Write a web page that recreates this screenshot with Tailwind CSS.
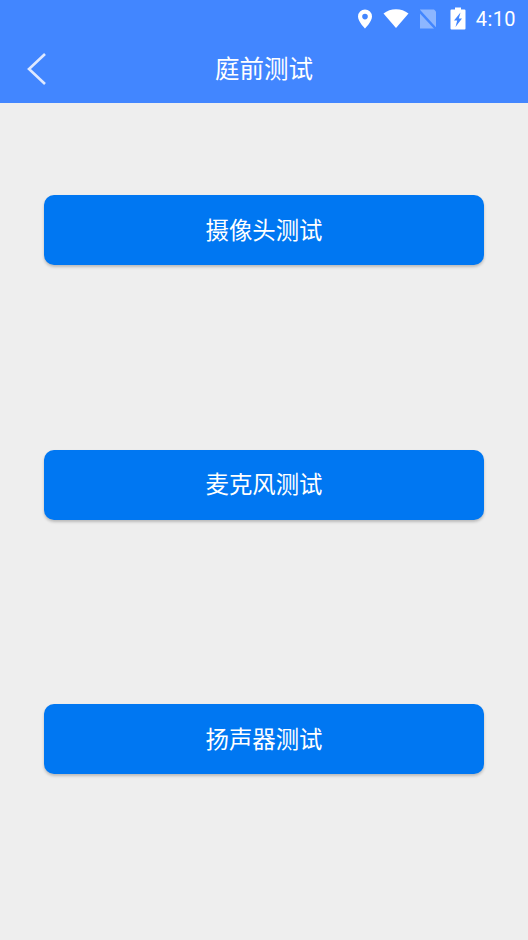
<!DOCTYPE html>
<html lang="zh">
<head>
  <meta charset="UTF-8">
  <title>庭前测试</title>
  <script src="https://cdn.jsdelivr.net/npm/@tailwindcss/browser@4"></script>
</head>
<body class="bg-[#eeeeee] h-[940px] w-[528px] overflow-hidden font-['Roboto','Noto_Sans_CJK_SC',sans-serif]">

  <!-- Header -->
  <div class="bg-[#4286ff] h-[103px] flex flex-col">
    <!-- Status bar -->
    <div class="h-[37px] flex items-center justify-end pr-3 text-white">
      <svg class="w-[16px] h-[20px] mr-[10px]" viewBox="0 0 16 20" fill="#fff">
        <path fill-rule="evenodd" d="M8 0.500a7 7 0 0 0-7 7c0 5 7 12 7 12s7-7 7-12a7 7 0 0 0-7-7zm0 4.300a2.800 2.800 0 1 1 0 5.600a2.800 2.800 0 0 1 0-5.600z"/>
      </svg>
      <svg class="w-[26px] h-[19px] mr-[10px]" viewBox="0 0 26 19" fill="#fff">
        <path d="M13 19L0.500 4.500C4 1.800 8.300 0.300 13 0.300s9 1.500 12.500 4.200z"/>
      </svg>
      <svg class="w-[18px] h-[20px] mr-[13px]" viewBox="0 0 18 20">
        <path d="M1 0.500H15l2 2V19.500H1z" fill="#fff" fill-opacity="0.4"/>
        <path d="M-1 0.500L17 20" stroke="#4286ff" stroke-width="2.500"/>
      </svg>
      <svg class="w-[16px] h-[23px] mr-[10px]" viewBox="0 0 16 23">
        <path fill-rule="evenodd" fill="#fff" d="M5 0.500h6v2h3.500a1 1 0 0 1 1 1V21.500a1 1 0 0 1-1 1H1.500a1 1 0 0 1-1-1V3.500a1 1 0 0 1 1-1H5zM10.500 5.500L4 13.500h3.200L5.500 20l6.500-8.500H8.800z"/>
      </svg>
      <span class="text-[20px] leading-none tracking-[0.4px] font-normal">4:10</span>
    </div>
    <!-- Title row -->
    <div class="relative flex-1 flex items-center justify-center pt-[1px]">
      <svg class="absolute left-[26px] top-[15px] w-[21px] h-[34px]" viewBox="0 0 21 34" fill="none" stroke="#dfe9ff" stroke-width="2.600">
        <path d="M19 2L3 17L19 32"/>
      </svg>
      <span class="text-white text-[24.500px] leading-none">庭前测试</span>
    </div>
  </div>

  <!-- Buttons -->
  <div class="flex flex-col gap-[184.500px] px-[44px] pt-[92px]">
    <button class="h-[70px] pt-[3px] rounded-[10px] bg-[#0077f2] text-white text-[23.400px] shadow-[0_2px_3px_rgba(0,0,0,0.22)]">摄像头测试</button>
    <button class="h-[70px] pt-[3px] rounded-[10px] bg-[#0077f2] text-white text-[23.400px] shadow-[0_2px_3px_rgba(0,0,0,0.22)]">麦克风测试</button>
    <button class="h-[70px] pt-[3px] rounded-[10px] bg-[#0077f2] text-white text-[23.400px] shadow-[0_2px_3px_rgba(0,0,0,0.22)]">扬声器测试</button>
  </div>

</body>
</html>
